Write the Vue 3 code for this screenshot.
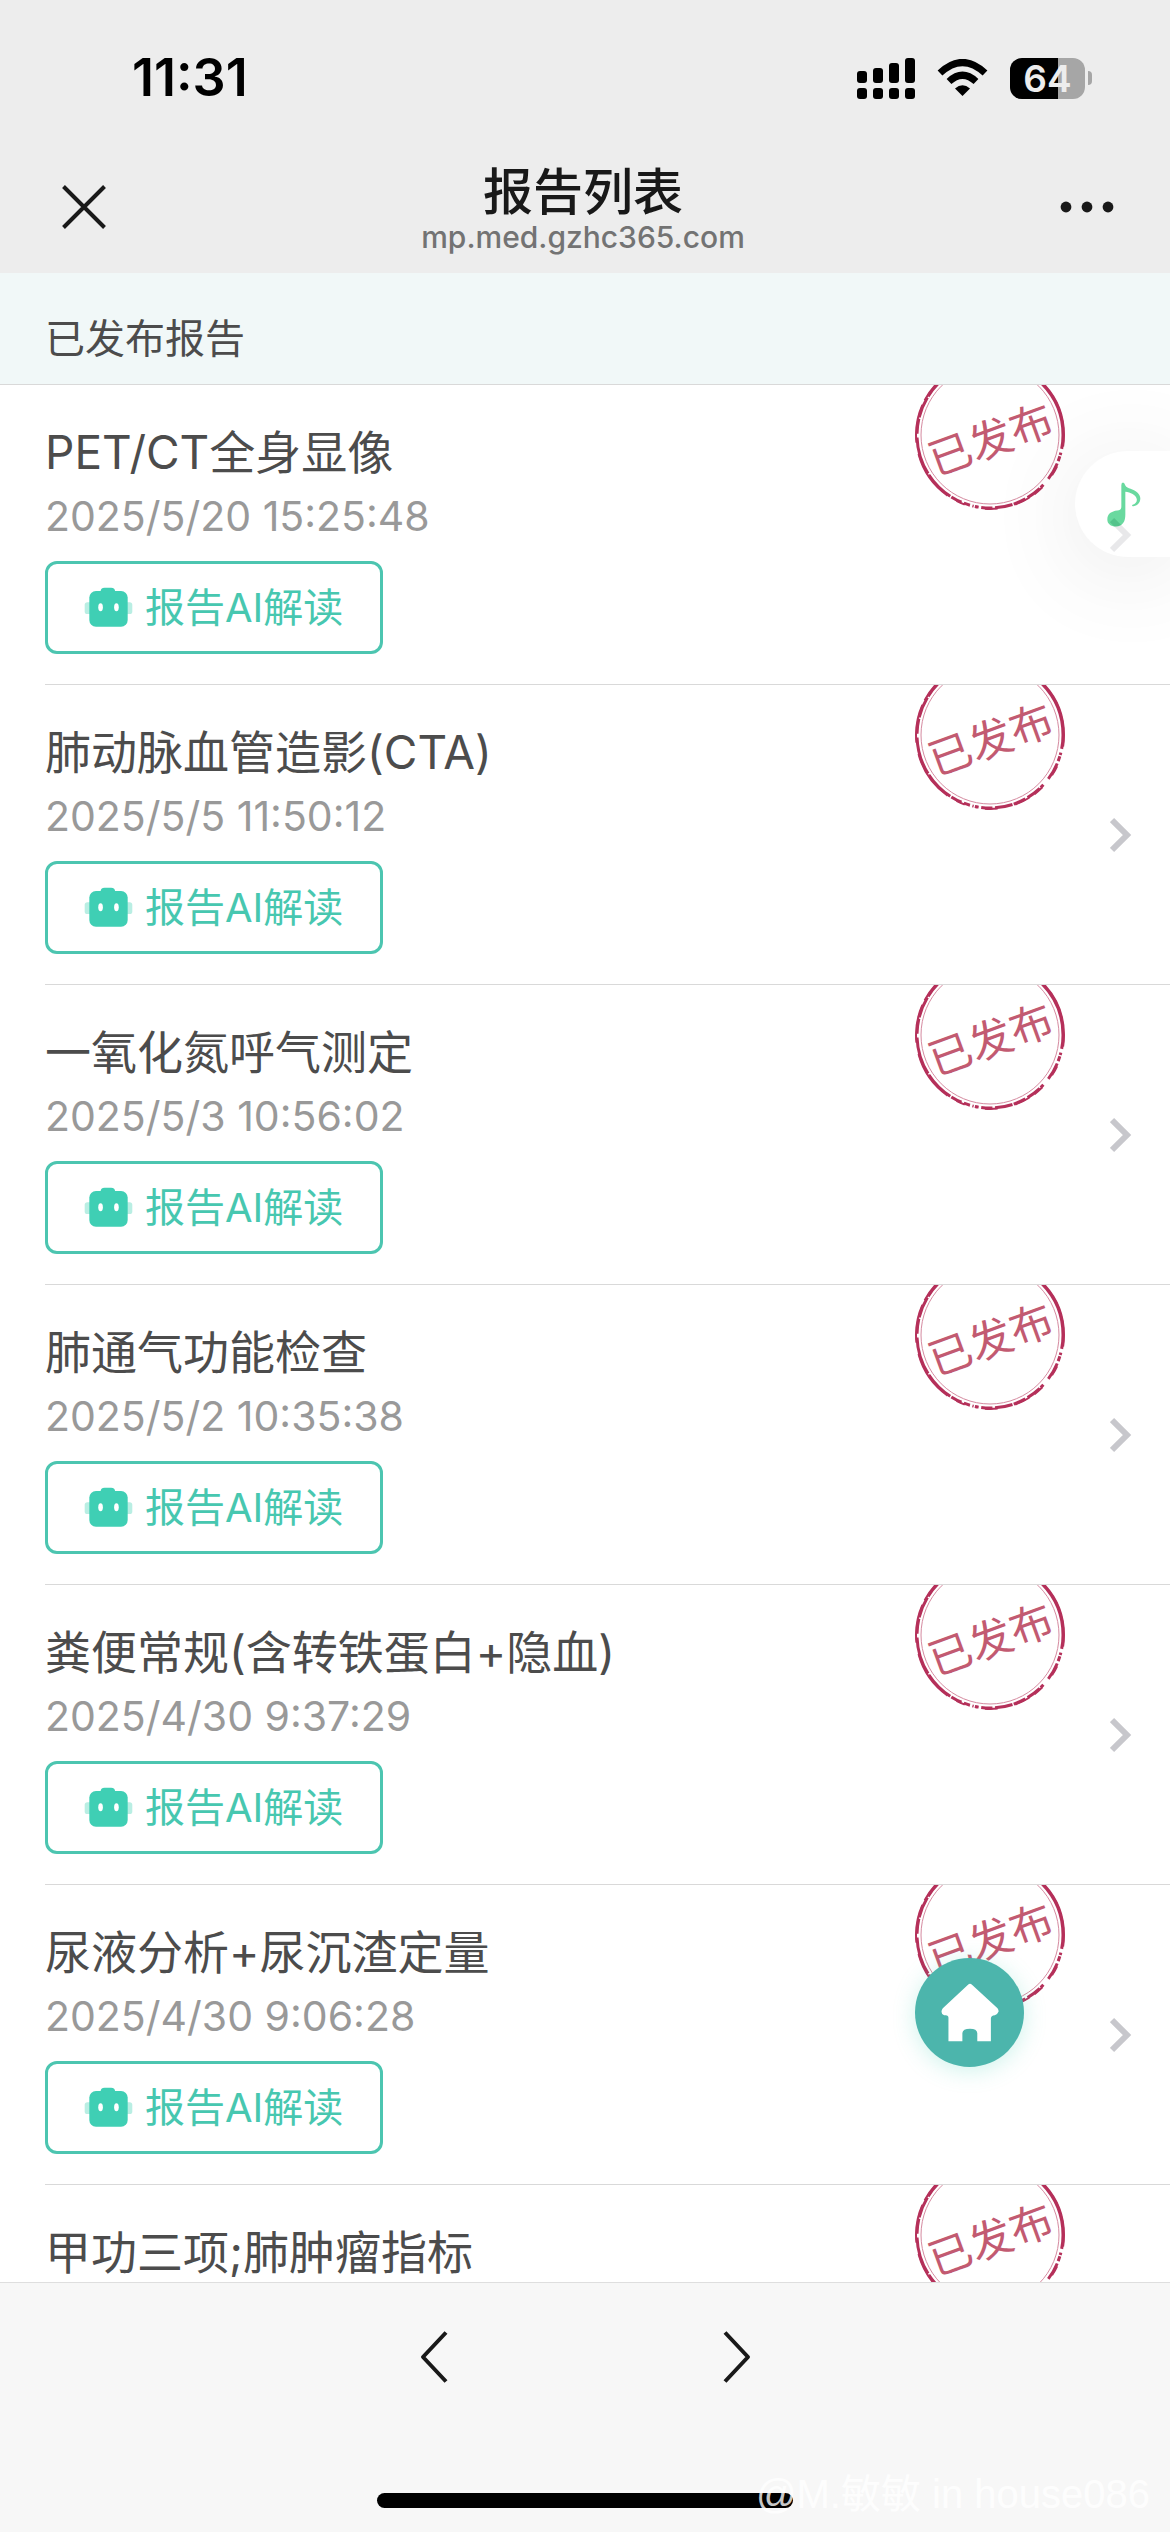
<script setup>
    import { ref } from 'vue'

    const battery = ref(64)

    const reports = ref([
        { id: 1, name: 'PET/CT全身显像', time: '2025/5/20 15:25:48' },
        { id: 2, name: '肺动脉血管造影(CTA)', time: '2025/5/5 11:50:12' },
        { id: 3, name: '一氧化氮呼气测定', time: '2025/5/3 10:56:02' },
        { id: 4, name: '肺通气功能检查', time: '2025/5/2 10:35:38' },
        { id: 5, name: '粪便常规(含转铁蛋白+隐血)', time: '2025/4/30 9:37:29' },
        { id: 6, name: '尿液分析+尿沉渣定量', time: '2025/4/30 9:06:28' },
        { id: 7, name: '甲功三项;肺肿瘤指标', time: '' },
    ])
</script>

<template>
    <div class="page">
        <header class="top">
            <div class="status">
                <span class="clock">11:31</span>
                <div class="status-icons">
                    <svg width="58" height="41" viewBox="0 0 58 41">
                        <rect x="0" y="13" width="10" height="12" rx="3" />
                        <rect x="16" y="10" width="10" height="15" rx="3" />
                        <rect x="32" y="5" width="10" height="20" rx="3" />
                        <rect x="48" y="0" width="10" height="25" rx="3" />
                        <rect x="0" y="30" width="10" height="11" rx="3" />
                        <rect x="16" y="30" width="10" height="11" rx="3" />
                        <rect x="32" y="30" width="10" height="11" rx="3" />
                        <rect x="48" y="30" width="10" height="11" rx="3" />
                    </svg>
                    <svg class="wifi" width="51" height="38" viewBox="0 0 51 38">
                        <path d="M3 14 Q25.500 -7 48 14" fill="none" stroke="#000" stroke-width="7" />
                        <path d="M12 22.500 Q25.500 10 39 22.500" fill="none" stroke="#000" stroke-width="7" />
                        <path d="M18 29.500 Q25.500 23 33 29.500 L25.500 37 Z" />
                    </svg>
                    <div class="battery">
                        <div class="battery-body">
                            <div class="battery-level" :style="{ width: battery + '%' }"></div>
                            <span class="battery-text">{{ battery }}</span>
                        </div>
                        <div class="battery-tip"></div>
                    </div>
                </div>
            </div>
            <div class="nav">
                <button class="nav-btn" aria-label="关闭">
                    <svg width="44" height="44" viewBox="0 0 44 44" fill="none" stroke="#191919" stroke-width="4">
                        <path d="M1.500 1.500 L42.500 42.500 M42.500 1.500 L1.500 42.500" />
                    </svg>
                </button>
                <div class="heading">
                    <h1>报告列表</h1>
                    <p>mp.med.gzhc365.com</p>
                </div>
                <button class="nav-btn nav-btn--right" aria-label="更多">
                    <svg width="54" height="12" viewBox="0 0 54 12" fill="#191919">
                        <circle cx="6" cy="6" r="5.400" />
                        <circle cx="27" cy="6" r="5.400" />
                        <circle cx="48" cy="6" r="5.400" />
                    </svg>
                </button>
            </div>
        </header>

        <main class="content">
            <h2 class="section">已发布报告</h2>
            <ul class="list">
                <li v-for="report in reports" :key="report.id" class="item">
                    <div class="item-body">
                        <h3 class="name">{{ report.name }}</h3>
                        <p class="time">{{ report.time }}</p>
                        <button v-if="report.time" class="ai">
                            <svg width="49" height="41" viewBox="0 0 148 124">
                                <rect x="2" y="46" width="144" height="36" rx="8" fill="#b9eee3" />
                                <rect x="50" y="2" width="44" height="30" rx="12" fill="#3fcfb4" />
                                <rect x="16" y="12" width="116" height="108" rx="20" fill="#3fcfb4" />
                                <ellipse cx="50" cy="61" rx="7" ry="12" fill="#fff" />
                                <ellipse cx="98" cy="61" rx="7" ry="12" fill="#fff" />
                            </svg>
                            <span>报告AI解读</span>
                        </button>
                    </div>
                    <svg v-if="report.time" class="arrow" width="22" height="36" viewBox="0 0 22 36" fill="none" stroke="#c7c7cc" stroke-width="6">
                        <path d="M2 3 L17 18 L2 33" />
                    </svg>
                    <svg class="stamp" width="150" height="150" viewBox="0 0 150 150">
                        <!-- worn outer ring, starts at 3 o'clock and runs clockwise -->
                        <circle cx="75" cy="75" r="73" fill="none" stroke="#b5305a" stroke-width="3" pathLength="360"
                            stroke-dasharray="11 3 2 1 4 2 14 6 3 1 12 2 10 1 14 2 9 2 3 1 1 2 5 2 9 1 24 1 30 3 12 1 17 1 150" />
                        <circle cx="75" cy="75" r="74" fill="none" stroke="#b5305a" stroke-width="2" pathLength="360"
                            stroke-dasharray="9 16 8 12 8 5 12 14 10 16 7 8 40 9 30 4 25 3 130" />
                        <circle cx="75" cy="75" r="69" fill="none" stroke="#d58aa0" stroke-width="1" />
                        <text x="76" y="95" transform="rotate(-20 76 80)" text-anchor="middle" font-size="43" fill="#c25a71">已发布</text>
                    </svg>
                </li>
            </ul>
        </main>

        <footer class="bottom">
            <div class="pager">
                <button aria-label="后退">
                    <svg width="28" height="52" viewBox="0 0 28 52" fill="none" stroke="#191919" stroke-width="4" stroke-linejoin="round">
                        <path d="M26 1.500 L3 26 L26 50.500" />
                    </svg>
                </button>
                <button aria-label="前进">
                    <svg width="28" height="52" viewBox="0 0 28 52" fill="none" stroke="#191919" stroke-width="4" stroke-linejoin="round">
                        <path d="M2 1.500 L25 26 L2 50.500" />
                    </svg>
                </button>
            </div>
            <div class="indicator"></div>
            <span class="watermark">@M.敏敏 in house086</span>
        </footer>

        <button class="music" aria-label="音乐">
            <svg width="36" height="47" viewBox="0 0 108 140" fill="#07c160">
                <path d="M46 12 Q46 4 51 4 Q55 4 58 13 C64 24 82 22 94 34 C103 42 105 52 101 62 C97 71 88 76 80 75 C77 74 78 72 80 71 C90 68 94 60 92 53 C89 41 74 34 58 32 L58 100 C58 122 50 135 30 136 C14 136 4 128 4 115 C4 98 16 90 34 88 C43 87 46 84 46 76 Z" />
            </svg>
        </button>
        <a class="home" href="#" aria-label="首页">
            <svg width="60" height="61" viewBox="0 0 180 184" fill="#fff">
                <path d="M84 8 Q90 2 96 8 L173 79 Q177 84 176 90 Q173 98 165 100 Q153 101 153 110 L153 179 L112 179 L112 154 Q111 141 90 141 Q68 141 67 154 L67 179 L25 179 L25 108 Q25 100 17 100 L12 100 Q4 98 4 90 Q4 84 8 79 Z" />
            </svg>
        </a>
    </div>
</template>

<style>
    body {
        background: #fff;
    }
</style>

<style scoped>
    .page {
        position: relative;
        display: flex;
        flex-direction: column;
        height: 100vh;
        overflow: hidden;
        font-family: Inter, "Noto Sans CJK SC", sans-serif;
        color: #4c4c4c;
    }

    h1, h2, h3, p, ul {
        margin: 0;
        padding: 0;
        font-weight: 400;
    }

    button {
        border: 0;
        padding: 0;
        background: none;
        font-family: inherit;
        cursor: pointer;
    }

    svg {
        display: block;
        flex: none;
    }

    .top {
        background: #ededed;
        padding-bottom: 16px;
    }

    .status {
        display: flex;
        justify-content: space-between;
        align-items: center;
        height: 100px;
        padding: 28px 78px 28px 132px;
    }

    .clock {
        font-size: 52px;
        line-height: 60px;
        font-weight: 600;
        color: #000;
    }

    .status-icons {
        display: flex;
        align-items: center;
        gap: 22px;
    }

    .battery {
        display: flex;
        align-items: center;
        gap: 3px;
    }

    .battery-body {
        position: relative;
        width: 75px;
        height: 41px;
        border-radius: 12px;
        background: #a6a6a6;
        text-align: center;
    }

    .battery-level {
        position: absolute;
        inset: 0 auto 0 0;
        border-radius: 12px 0 0 12px;
        background: #000;
    }

    .battery-text {
        position: relative;
        font-size: 37px;
        line-height: 41px;
        font-weight: 600;
        color: #ededed;
    }

    .battery-tip {
        width: 4px;
        height: 14px;
        border-radius: 0 4px 4px 0;
        background: #a6a6a6;
    }

    .nav {
        display: flex;
        justify-content: space-between;
        align-items: center;
        height: 101px;
        padding: 0 56px 0 62px;
    }

    .nav-btn {
        display: flex;
        width: 60px;
    }

    .nav-btn--right {
        justify-content: flex-end;
        width: 70px;
    }

    .heading {
        text-align: center;
    }

    .heading h1 {
        font-size: 50px;
        line-height: 60px;
        font-weight: 500;
        color: #191919;
    }

    .heading p {
        font-size: 30px;
        line-height: 30px;
        font-weight: 500;
        color: #737373;
    }

    .content {
        flex: 1;
        min-height: 0;
        overflow: hidden;
    }

    .section {
        padding: 36px 45px 15px;
        border-bottom: 1px solid #d9d9d9;
        background: #f1f8f8;
        font-size: 40px;
        line-height: 60px;
    }

    .list {
        list-style: none;
    }

    .item {
        position: relative;
        display: flex;
        align-items: center;
        margin-left: 45px;
        padding: 30px 38px 30px 0;
        border-top: 1px solid #d9d9d9;
        overflow: hidden;
    }

    .item:first-child {
        border-top: 0;
    }

    .item-body {
        flex: 1;
    }

    .name {
        font-size: 46px;
        line-height: 74px;
    }

    .time {
        min-height: 54px;
        margin-bottom: 18px;
        font-size: 41px;
        line-height: 54px;
        color: #999;
    }

    .ai {
        display: flex;
        align-items: center;
        gap: 12px;
        height: 93px;
        padding: 0 37px 0 36px;
        border: 3px solid #4cc5b0;
        border-radius: 12px;
        font-size: 40px;
        line-height: 56px;
        color: #47c7b0;
    }

    .stamp {
        position: absolute;
        top: -25px;
        right: 105px;
    }

    .bottom {
        position: relative;
        display: flex;
        flex-direction: column;
        align-items: center;
        justify-content: space-between;
        padding: 48px 0 24px;
        height: 177px;
        border-top: 1px solid #dedede;
        background: #f7f7f7;
    }

    .pager {
        display: flex;
        gap: 275px;
    }

    .indicator {
        width: 416px;
        height: 15px;
        border-radius: 8px;
        background: #000;
    }

    .watermark {
        position: absolute;
        right: 20px;
        bottom: 12px;
        font-family: "Liberation Sans", "Noto Sans CJK SC", sans-serif;
        font-size: 40px;
        line-height: 52px;
        color: rgba(255, 255, 255, 0.8);
    }

    .music {
        position: absolute;
        top: 451px;
        right: 0;
        display: flex;
        align-items: center;
        width: 95px;
        height: 106px;
        padding-left: 31px;
        border-radius: 53px 0 0 53px;
        background: #fff;
        box-shadow: 0 12px 90px rgba(0, 0, 0, 0.14);
        opacity: 0.6;
    }

    .home {
        position: absolute;
        right: 146px;
        bottom: 465px;
        display: flex;
        align-items: center;
        justify-content: center;
        width: 109px;
        height: 109px;
        border-radius: 50%;
        background: #4cb5ac;
        box-shadow: 0 4px 22px rgba(64, 207, 180, 0.25);
    }
</style>
